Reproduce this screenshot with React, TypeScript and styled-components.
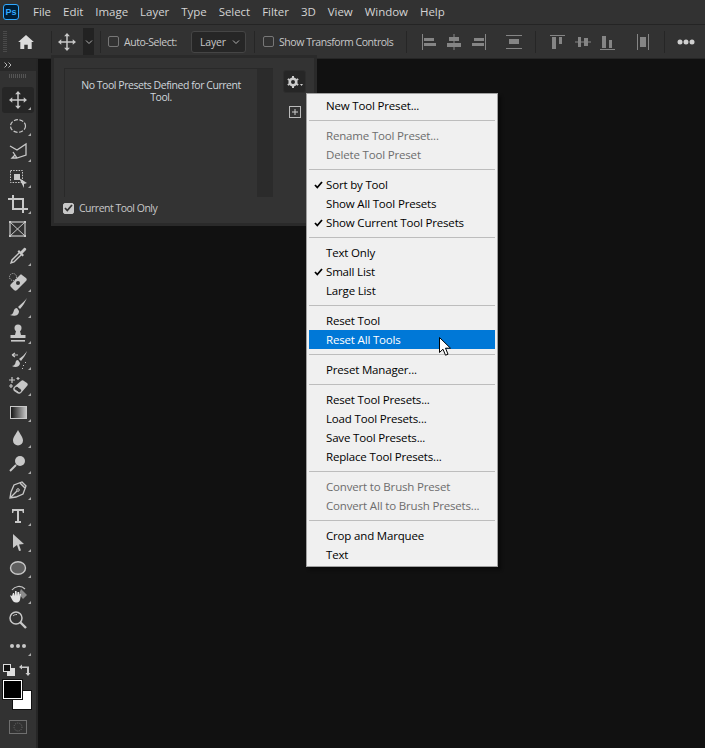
import React from "react";
import styled, { createGlobalStyle } from "styled-components";

const Global = createGlobalStyle`
  html, body { margin: 0; padding: 0; background: #111; }
  body { font-family: "Open Sans", "Noto Sans", sans-serif; }
  * { box-sizing: border-box; }
`;
const Page = styled.div`
  position: relative; width: 705px; height: 748px; overflow: hidden;
  display: flex; flex-direction: column; background: #111;
`;
const MenuBar = styled.div`
  height: 25px; background: #323232; border-bottom: 1px solid #242424;
  display: flex; align-items: center; padding-left: 3px; color: #d4d4d4;
  font-size: 11.5px; letter-spacing: -0.04px;
`;
const PsLogo = styled.div`
  width: 16px; height: 16px; border: 1px solid #31a8ff; border-radius: 3px; background: #001e36;
  color: #31a8ff; font: bold 9px/14px "Liberation Sans", sans-serif; text-align: center; margin-right: 14px;
`;
const MenuBarItem = styled.span`margin-right: 12px; line-height: 24px;`;
const OptionsBar = styled.div`
  height: 34px; background: #323232; border-bottom: 1px solid #262626;
  display: flex; align-items: center; color: #c8c8c8; font-size: 10.5px; letter-spacing: -0.45px;
`;
const Grip = styled.div`
  width: 4px; height: 22px; margin-left: 3px; margin-right: 7px; flex: none;
  background: repeating-linear-gradient(to bottom, #4a4a4a 0 1px, transparent 1px 2px);
`;
const Slot = styled.div<{ $w: number; $ml?: number }>`
  width: ${p => p.$w}px; height: 26px; flex: none; margin-left: ${p => p.$ml ?? 0}px;
  display: flex; align-items: center; justify-content: center;
`;
const Sep = styled.div<{ $ml?: number; $mr?: number }>`
  width: 1px; height: 22px; background: #262626; flex: none;
  margin-left: ${p => p.$ml ?? 0}px; margin-right: ${p => p.$mr ?? 0}px;
`;
const DarkArrow = styled.div`
  width: 11px; height: 27px; background: #222; display: flex; align-items: center; justify-content: center; flex: none; margin-left: 1px;
`;
const Check = styled.div<{ $on?: boolean }>`
  width: 11px; height: 11px; border-radius: 2px; flex: none;
  border: 1px solid ${p => (p.$on ? "#c8c8c8" : "#777")};
  background: ${p => (p.$on ? "#c8c8c8" : "transparent")};
  display: flex; align-items: center; justify-content: center;
`;
const OptLabel = styled.span<{ $w: number }>`margin-left: 5px; width: ${p => p.$w}px; white-space: nowrap; flex: none;`;
const Select = styled.div`
  width: 55px; height: 22px; background: #262626; border: 1px solid #454545; border-radius: 3px; flex: none;
  display: flex; align-items: center; justify-content: space-between; padding: 0 5px 0 8px; margin-left: 14px; color: #c8c8c8;
  letter-spacing: -0.2px;
`;
const Body = styled.div`flex: 1; display: flex; min-height: 0;`;
const Toolbar = styled.div`
  width: 38px; flex: none; background: #323232; border-right: 2px solid #262626;
  display: flex; flex-direction: column; align-items: stretch;
`;
const ToolHead = styled.div`
  height: 12px; background: #282828; padding: 3px 0 0 4px; display: flex; align-items: flex-start;
`;
const ToolGrip = styled.div`
  height: 16px; margin: 0 9px; flex: none; position: relative;
  &::after { content: ""; position: absolute; left: 0; right: 0; top: 3px; height: 4px;
    background: repeating-linear-gradient(to right, #555 0 1px, transparent 1px 2px); }
`;
const Tool = styled.div<{ $active?: boolean; $corner?: boolean }>`
  position: relative; height: 26px; width: 32px; margin-left: 2px; flex: none;
  display: flex; align-items: center; justify-content: center;
  border-radius: 3px;
  background: ${p => (p.$active ? "#262626" : "transparent")};
  ${p => p.$corner ? `&::after { content: ""; position: absolute; right: 3px; bottom: 3px; width: 0; height: 0;
    border-left: 3px solid transparent; border-bottom: 3px solid #aaa; }` : ""}
`;
const SwapRow = styled.div`
  display: flex; justify-content: space-between; padding: 5px 5px 0 3px; height: 21px; flex: none;
`;
const Colors = styled.div`
  position: relative; height: 33px; flex: none;
`;
const Fg = styled.div`
  position: absolute; left: 3px; top: 0; width: 19px; height: 19px; background: #000; border: 1px solid #fff; z-index: 1; outline: 1px solid #111;
`;
const Bg = styled.div`
  position: absolute; left: 12px; top: 10px; width: 20px; height: 20px; background: #fff; border: 1px solid #111;
`;
const MaskWrap = styled.div`
  display: flex; justify-content: flex-start; padding: 7px 0 0 9px;
`;
const Workspace = styled.div`flex: 1; background: #111;`;

const Popup = styled.div`
  position: absolute; left: 51px; top: 55px; width: 266px; height: 171px;
  background: #333; border: 3px solid #2a2a2a;
`;
const PresetList = styled.div`
  position: absolute; left: 10px; top: 10px; width: 209px; height: 129px;
  border-left: 1px solid #292929; border-top: 1px solid #292929;
  display: flex;
`;
const PresetText = styled.div`
  flex: 1; color: #cfd6dc; font-size: 10.5px; line-height: 12px; text-align: center; padding: 10px 6px 0 6px; letter-spacing: -0.45px;
`;
const Scroll = styled.div`width: 16px; background: #2b2b2b; flex: none;`;
const GearBtn = styled.div`
  position: absolute; left: 229px; top: 12px; width: 23px; height: 23px;
  background: #262626; border-radius: 3px; border: 1px solid #2d2d2d;
  display: flex; align-items: center; justify-content: center;
`;
const PlusBtn = styled.div`position: absolute; left: 235px; top: 48px; display: flex;`;
const PopupCheck = styled.label`
  position: absolute; left: 9px; top: 143px; display: flex; align-items: center; color: #c8c8c8; font-size: 10.5px; letter-spacing: -0.5px;
`;
const Menu = styled.div`
  position: absolute; left: 306px; top: 93px; width: 192px; height: 474px;
  background: #f0f0f0; border: 1px solid #a0a0a0; padding: 2px;
  box-shadow: 3px 3px 3px rgba(0,0,0,.45);
  font-size: 11.5px; letter-spacing: -0.17px;
`;
const Item = styled.div<{ $dis?: boolean; $hi?: boolean }>`
  position: relative; height: 19px; line-height: 19px; padding-left: 17px; white-space: nowrap;
  color: ${p => (p.$hi ? "#fff" : p.$dis ? "#6d6d6d" : "#000")};
  background: ${p => (p.$hi ? "#0078d7" : "transparent")};
`;
const Tick = styled.span`position: absolute; left: 5px; top: 0; display: flex; height: 19px; align-items: center;`;
const MenuSep = styled.div`height: 11px; padding-top: 5px; &::after { content: ""; display: block; height: 1px; background: #bdbdbd; }`;
const Cursor = styled.svg`position: absolute; left: 439px; top: 337px;`;

const ic = "#c8c8c8";
const S = ({ w = 22, children }: { w?: number; children: React.ReactNode }) => (
  <svg width={w} height={w} viewBox="0 0 22 22">{children}</svg>
);
const MoveIcon = ({ w = 18 }: { w?: number }) => (
  <S w={w}>
    <path d="M11 2v18M2 11h18" stroke={ic} strokeWidth="1.8" fill="none" />
    <path d="M11 0l3.500 4h-7zM11 22l3.500-4h-7zM0 11l4-3.500v7zM22 11l-4-3.500v7z" fill={ic} />
  </S>
);
const icons: React.ReactNode[] = [
  <MoveIcon />,
  <S><ellipse cx="11" cy="11" rx="7.500" ry="6.300" fill="none" stroke={ic} strokeWidth="1.200" strokeDasharray="4 1.600" /></S>,
  <S><path d="M3 5l7 4 9-6v11l-9 3-4-6M10 17l-5 0 3-3" fill="none" stroke={ic} strokeWidth="1.300" /></S>,
  <S><rect x="3.500" y="3.500" width="12" height="12" fill="none" stroke={ic} strokeDasharray="1.500 1.200" /><rect x="7" y="7" width="6" height="6" fill={ic} /><path d="M12 11l8 5-3 1 0 4z" fill={ic} /></S>,
  <S><path d="M1 6h4M6 2v14h12M6 6h10v14M18 16h3" fill="none" stroke={ic} strokeWidth="2" /></S>,
  <S><rect x="3" y="3" width="15" height="14" fill="none" stroke={ic} strokeWidth="1.200" /><path d="M3 3l15 14M18 3L3 17" stroke={ic} strokeWidth="1" /><path d="M2 2h2v2H2zM17 2h2v2h-2zM2 16h2v2H2zM17 16h2v2h-2z" fill={ic} /></S>,
  <S><path d="M13 7l-8 8-1 3 3-1 8-8" fill="none" stroke={ic} strokeWidth="1.400" /><path d="M12 5l1.500 1.500L17 3c1-1 3 1 2 2l-3.500 3.500L17 10l-1.500 1.500-5-5z" fill={ic} /></S>,
  <S><circle cx="6" cy="6" r="3.500" fill="none" stroke={ic} strokeDasharray="1 1.200" /><path d="M15 4l4 3c1 1 1 2 0 3l-9 9c-1 1-2 1-3 0l-3-3c-1-1-1-2 0-3l9-9c1-1 1-1 2 0z" fill={ic} /><circle cx="11" cy="12" r="2" fill="#323232" /></S>,
  <S><path d="M20 1c-2 3-6 6-9 9l2 2c3-3 5-7 7-11z" fill={ic} /><path d="M10 11c-3 0-3 3-4 5-.5 1-2 2-3 2 4 1.500 9 1 9-4z" fill={ic} /></S>,
  <S><circle cx="11" cy="5" r="3.500" fill={ic} /><path d="M9 8h4l1 4h4.500v3H3.500v-3H8z" fill={ic} /><rect x="4" y="17" width="14" height="1.600" fill={ic} /></S>,
  <S><path d="M20 2c-2 3-5 6-8 8l2 2c2-3 5-6 6-10z" fill={ic} /><path d="M11 11c-3 0-2 3-3 4-.5 1-2 2-3 2 3 2 8 1 8-3z" fill={ic} /><path d="M11 6H5M5 6l3-2M5 6l3 2" stroke={ic} strokeWidth="1.200" fill="none" /><path d="M16 16h1v1h-1zM18 13h1v1h-1zM15 19h1v1h-1z" fill={ic} /></S>,
  <S><path d="M14 6c1-1 2-1 3 0l3 2c1 1 1 2 0 3l-6 7c-1 1-3 1-4 0l-3-2c-1-1-1-3 0-4z" fill={ic} /><path d="M10 11l5 4-1 2c-1 1-2 1-3 0l-3-2c-1-1-1-2 0-3z" fill="#323232" stroke={ic} /><path d="M5 2v6M2 5h6M11 2v3M9.500 3.500h3M2 11h4M4 9v4" stroke={ic} strokeWidth="1.200" /></S>,
  <svg width="17" height="13"><defs><linearGradient id="g1"><stop offset="0" stopColor="#111" /><stop offset="1" stopColor="#c8c8c8" /></linearGradient></defs><rect x=".5" y=".5" width="16" height="12" fill="url(#g1)" stroke={ic} /></svg>,
  <S><path d="M11 3c2 4 5 7 5 10.500a5 5 0 0 1-10 0C6 10 9 7 11 3z" fill={ic} /></S>,
  <S><circle cx="13" cy="8" r="5" fill={ic} /><path d="M9 12l-6 6" stroke={ic} strokeWidth="2" /></S>,
  <S><path d="M15 3l4 4-3 8-7 3-6 1 1-6 3-7zM4 18l6-6" fill="none" stroke={ic} strokeWidth="1.300" /><circle cx="11" cy="11" r="1.300" fill="none" stroke={ic} /><path d="M13 4l5 5" stroke={ic} strokeWidth="1.500" /></S>,
  <S><path d="M5 4h12v4h-1.200l-.5-2h-3.300v10h2v2H8v-2h2V6H6.700l-.5 2H5z" fill={ic} /></S>,
  <S><path d="M6 3l11 10-5 .5 2 6-2 .5-2-6-4 3z" fill={ic} /></S>,
  <S><ellipse cx="11" cy="11" rx="7.500" ry="6.300" fill="#5f5f5f" stroke={ic} strokeWidth="1.400" /></S>,
  <S><path d="M5 7c3-4 9-5 13-1" fill="none" stroke={ic} strokeWidth="1.200" /><path d="M14 6l6 6-4 4-4-5z" fill="#8a8a8a" /><path d="M5 13l1-3 1 0 1 3 0-5 1.500 0 .5 5 .5-4 1.500 0 0 4 .5-2h1.500l-1 6c-.5 2-2 2.500-4 2.500s-3-1-4-3l-2-4h1z" fill="#e4e4e4" /></S>,
  <S><circle cx="9" cy="9" r="6" fill="none" stroke={ic} strokeWidth="1.500" /><path d="M13 13l6 6" stroke={ic} strokeWidth="2.400" /><path d="M6 7c1-1 2-1.500 4-1.500" stroke={ic} fill="none" /></S>,
  <S><circle cx="5" cy="11" r="2" fill={ic} /><circle cx="11" cy="11" r="2" fill={ic} /><circle cx="17" cy="11" r="2" fill={ic} /></S>,
];
const noCorner = new Set([5, 20]);

const Bars = ({ d }: { d: string }) => (
  <svg width="20" height="20" viewBox="0 0 20 20"><path d={d} fill="#858585" /></svg>
);
const Chevron = () => (
  <svg width="8" height="6" viewBox="0 0 8 6"><path d="M1 1.500l3 3 3-3" fill="none" stroke="#b0b0b0" strokeWidth="1" /></svg>
);
const TickMark = ({ c = "#000" }: { c?: string }) => (
  <svg width="9" height="8" viewBox="0 0 9 8"><path d="M1 4l2.300 2.500L8 1" fill="none" stroke={c} strokeWidth="1.800" /></svg>
);

type Row = { t?: string; dis?: boolean; tick?: boolean; hi?: boolean } | null;
const rows: Row[] = [
  { t: "New Tool Preset..." }, null,
  { t: "Rename Tool Preset...", dis: true }, { t: "Delete Tool Preset", dis: true }, null,
  { t: "Sort by Tool", tick: true }, { t: "Show All Tool Presets" }, { t: "Show Current Tool Presets", tick: true }, null,
  { t: "Text Only" }, { t: "Small List", tick: true }, { t: "Large List" }, null,
  { t: "Reset Tool" }, { t: "Reset All Tools", hi: true }, null,
  { t: "Preset Manager..." }, null,
  { t: "Reset Tool Presets..." }, { t: "Load Tool Presets..." }, { t: "Save Tool Presets..." }, { t: "Replace Tool Presets..." }, null,
  { t: "Convert to Brush Preset", dis: true }, { t: "Convert All to Brush Presets...", dis: true }, null,
  { t: "Crop and Marquee" }, { t: "Text" },
];
const menus = ["File", "Edit", "Image", "Layer", "Type", "Select", "Filter", "3D", "View", "Window", "Help"];

export default function App() {
  return (
    <Page>
      <Global />
      <MenuBar>
        <PsLogo>Ps</PsLogo>
        {menus.map(m => <MenuBarItem key={m}>{m}</MenuBarItem>)}
      </MenuBar>
      <OptionsBar>
        <Grip />
        <Slot $w={24}>
          <svg width="16" height="14" viewBox="0 0 18 16"><path d="M9 0L0 8h2.500v8h4.500v-5h4v5h4.500V8H18z" fill="#dcdcdc" /></svg>
        </Slot>
        <Sep $ml={13} />
        <Slot $w={30}><MoveIcon /></Slot>
        <DarkArrow><Chevron /></DarkArrow>
        <Sep $ml={6} $mr={7} />
        <Check />
        <OptLabel $w={53}>Auto-Select:</OptLabel>
        <Select>Layer<Chevron /></Select>
        <Sep $ml={8} $mr={8} />
        <Check />
        <OptLabel $w={111}>Show Transform Controls</OptLabel>
        <Sep $ml={16} $mr={10} />
        <Slot $w={26}><Bars d="M2 2h1v16H2zM4 6h10v3H4zM4 11h12v3H4z" /></Slot>
        <Slot $w={22}><Bars d="M9.500 2h1v16h-1zM5 5h10v4H5zM3 11h14v4H3z" /></Slot>
        <Slot $w={26}><Bars d="M17 2h1v16h-1zM6 6h10v3H6zM4 11h12v3H4z" /></Slot>
        <Slot $w={36} $ml={5}><Bars d="M2 3h16v1H2zM2 16h16v1H2zM5 7h10v5H5z" /></Slot>
        <Sep $ml={3} $mr={9} />
        <Slot $w={26}><Bars d="M2 3h15v1H2zM4 5h4v12H4zM11 5h3v7h-3z" /></Slot>
        <Slot $w={24}><Bars d="M2 9.500h16v1H2zM5 5h3v10H5zM11 6h4v8h-4z" /></Slot>
        <Slot $w={26}><Bars d="M2 17h15v1H2zM4 4h4v12H4zM11 8h3v8h-3z" /></Slot>
        <Slot $w={40} $ml={3}><Bars d="M3 2h1v16H3zM14 2h1v16h-1zM6 5h6v10H6z" /></Slot>
        <Sep $mr={8} />
        <Slot $w={26}><svg width="20" height="6" viewBox="0 0 20 6"><circle cx="4" cy="3" r="2.500" fill="#d0d0d0" /><circle cx="10" cy="3" r="2.500" fill="#d0d0d0" /><circle cx="16" cy="3" r="2.500" fill="#d0d0d0" /></svg></Slot>
      </OptionsBar>
      <Body>
        <Toolbar>
          <ToolHead>
            <svg width="8" height="6" viewBox="0 0 8 6"><path d="M.5.500L3 3 .5 5.500M4.500.500L7 3 4.500 5.500" fill="none" stroke="#b5b5b5" /></svg>
          </ToolHead>
          <ToolGrip />
          {icons.map((n, i) => (
            <Tool key={i} $active={i === 0} $corner={!noCorner.has(i)}>{n}</Tool>
          ))}
          <SwapRow>
            <svg width="12" height="12" viewBox="0 0 12 12"><rect x="4" y="4" width="8" height="8" fill="#ddd" /><rect x=".5" y=".5" width="7" height="7" fill="#111" stroke="#ddd" /></svg>
            <svg width="12" height="12" viewBox="0 0 12 12"><path d="M3 .5L0 3l3 2.500V4h5v5H6.500L9 12l2.500-3H10V2.500H3z" fill="#ccc" /></svg>
          </SwapRow>
          <Colors><Bg /><Fg /></Colors>
          <MaskWrap>
            <svg width="18" height="14" viewBox="0 0 18 14"><rect x=".5" y=".5" width="17" height="13" fill="none" stroke="#6f6f6f" /><circle cx="9" cy="7" r="4" fill="none" stroke="#6f6f6f" strokeDasharray="1 1.200" /></svg>
          </MaskWrap>
        </Toolbar>
        <Workspace />
      </Body>
      <Popup>
        <PresetList>
          <PresetText>No Tool Presets Defined for Current Tool.</PresetText>
          <Scroll />
        </PresetList>
        <GearBtn>
          <svg width="16" height="14" viewBox="0 0 16 14">
            <circle cx="6" cy="7" r="3.300" fill="none" stroke="#ccc" strokeWidth="2.600" />
            <path d="M6 1v2M6 11v2M0.800 4l1.700 1M9.500 9l1.700 1M0.800 10l1.700-1M9.500 5l1.700-1" stroke="#ccc" strokeWidth="2" />
            <path d="M13 9h3l-1.500 2z" fill="#ccc" />
          </svg>
        </GearBtn>
        <PlusBtn>
          <svg width="12" height="12" viewBox="0 0 12 12"><rect x=".5" y=".5" width="11" height="11" fill="none" stroke="#bbb" /><path d="M3 6h6M6 3v6" stroke="#ccc" /></svg>
        </PlusBtn>
        <PopupCheck>
          <Check $on><TickMark c="#333" /></Check>
          <OptLabel $w={80}>Current Tool Only</OptLabel>
        </PopupCheck>
      </Popup>
      <Menu>
        {rows.map((r, i) => r === null ? <MenuSep key={i} /> : (
          <Item key={i} $dis={r.dis} $hi={r.hi}>
            {r.tick && <Tick><TickMark /></Tick>}
            {r.t}
          </Item>
        ))}
      </Menu>
      <Cursor width="13" height="20" viewBox="0 0 13 20">
        <path d="M.5.500v15l3.500-3.300 2.500 6 2.500-1-2.500-6h5z" fill="#fff" stroke="#000" />
      </Cursor>
    </Page>
  );
}
